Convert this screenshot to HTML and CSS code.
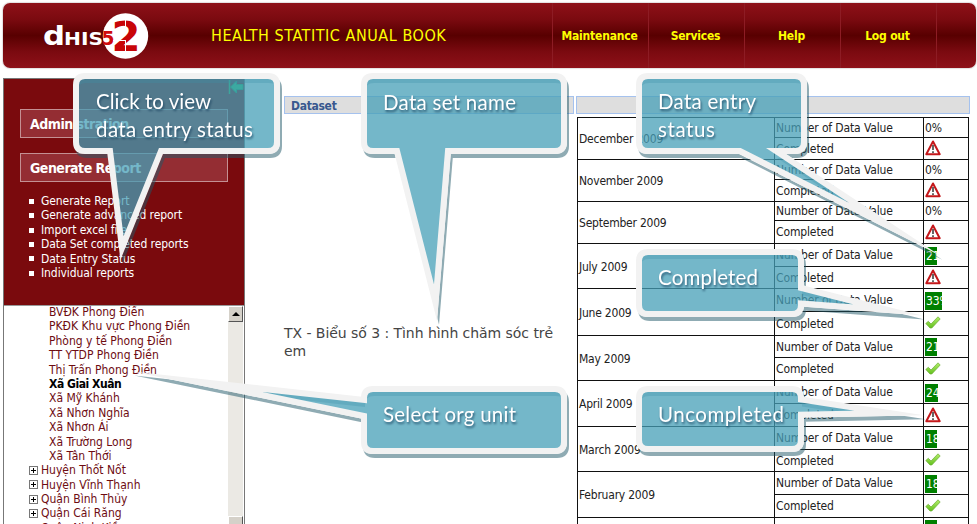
FILE: index.html
```
<!DOCTYPE html>
<html lang="vi">
<head>
<meta charset="utf-8">
<title>DHIS 2 - Data Entry Status</title>
<link rel="stylesheet" href="styles.css">
</head>
<body>
<header class="header">
  <svg class="logo" width="110" height="50" viewBox="42 11 110 50">
    <circle cx="125.500" cy="36" r="22.700" fill="#fff"/>
    <text class="logo-d" x="43" y="44.500" textLength="22" lengthAdjust="spacingAndGlyphs">d</text>
    <text class="logo-name" x="64" y="44.500" textLength="39" lengthAdjust="spacingAndGlyphs">HIS</text>
    <text class="logo-five" x="101.500" y="45" textLength="13" lengthAdjust="spacingAndGlyphs">5</text>
    <text class="logo-two" x="111.500" y="51" textLength="29" lengthAdjust="spacingAndGlyphs">2</text>
    <path d="M125.500 18V28M125.500 40V52M113 40.500H126" stroke="#fff"/>
  </svg>
  <h1 class="title">HEALTH STATITIC ANUAL BOOK</h1>
  <nav class="nav">
    <a>Maintenance</a><a>Services</a><a>Help</a><a>Log out</a>
  </nav>
</header>
<div class="page">
  <aside class="sidebar">
    <div class="menu">
      <svg class="hide-icon" width="16" height="14" viewBox="0 0 16 14"><path d="M1.500 0V14" stroke="#20b850" stroke-width="1.500"/><path d="M2.500 7L8.500 1V4.500H15V9.500H8.500V13Z" fill="#20c860" stroke="#10a050"/></svg>
      <div class="menu-head">Administration</div>
      <div class="menu-head">Generate Report</div>
      <ul class="links">
        <li>Generate Report</li><li>Generate advanced report</li><li>Import excel file</li><li>Data Set completed reports</li><li>Data Entry Status</li><li>Individual reports</li>
      </ul>
    </div>
    <div class="tree-wrap">
      <ul class="tree">
        <li class="leaf">BVĐK Phong Điền</li><li class="leaf">PKĐK Khu vực Phong Điền</li><li class="leaf">Phòng y tế Phong Điền</li><li class="leaf">TT YTDP Phong Điền</li><li class="leaf">Thị Trấn Phong Điền</li><li class="leaf selected">Xã Giai Xuân</li><li class="leaf">Xã Mỹ Khánh</li><li class="leaf">Xã Nhơn Nghĩa</li><li class="leaf">Xã Nhơn Ái</li><li class="leaf">Xã Trường Long</li><li class="leaf">Xã Tân Thới</li>
        <li><i class="plus"></i>Huyện Thốt Nốt</li><li><i class="plus"></i>Huyện Vĩnh Thạnh</li><li><i class="plus"></i>Quận Bình Thủy</li><li><i class="plus"></i>Quận Cái Răng</li><li><i class="plus"></i>Quận Ninh Kiều</li>
      </ul>
      <div class="scrollbar"><div class="scroll-up"><svg width="8" height="4"><path d="M0 4L4 0L8 4Z"/></svg></div><div class="thumb"></div></div>
    </div>
  </aside>
  <main class="main">
    <section class="dataset">
      <div class="col-head">Dataset</div>
      <p class="set-name">TX - Biểu số 3 : Tình hình chăm sóc trẻ em</p>
    </section>
    <section class="status">
      <div class="col-head"></div>
      <div class="grid">
        <div class="month">December 2009</div><div>Number of Data Value</div><div>0%</div><div>Completed</div><div><svg class="ico"><use href="#warn"/></svg></div>
        <div class="month">November 2009</div><div>Number of Data Value</div><div>0%</div><div>Completed</div><div><svg class="ico"><use href="#warn"/></svg></div>
        <div class="month">September 2009</div><div>Number of Data Value</div><div>0%</div><div>Completed</div><div><svg class="ico"><use href="#warn"/></svg></div>
        <div class="month">July 2009</div><div>Number of Data Value</div><div><b class="bar w21">21</b></div><div>Completed</div><div><svg class="ico"><use href="#warn"/></svg></div>
        <div class="month">June 2009</div><div>Number of Data Value</div><div><b class="bar w33">33%</b></div><div>Completed</div><div><svg class="ico"><use href="#ok"/></svg></div>
        <div class="month">May 2009</div><div>Number of Data Value</div><div><b class="bar w21">21</b></div><div>Completed</div><div><svg class="ico"><use href="#ok"/></svg></div>
        <div class="month">April 2009</div><div>Number of Data Value</div><div><b class="bar w24">24</b></div><div>Completed</div><div><svg class="ico"><use href="#warn"/></svg></div>
        <div class="month">March 2009</div><div>Number of Data Value</div><div><b class="bar w18">18</b></div><div>Completed</div><div><svg class="ico"><use href="#ok"/></svg></div>
        <div class="month">February 2009</div><div>Number of Data Value</div><div><b class="bar w18">18</b></div><div>Completed</div><div><svg class="ico"><use href="#ok"/></svg></div>
        <div class="last"></div><div class="last"></div><div class="last"><b class="bar w18"></b></div>
      </div>
    </section>
  </main>
</div>
<svg class="callouts" width="977" height="524" viewBox="0 0 977 524">
  <defs>
    <linearGradient id="tick" x1="0" y1="0" x2="0" y2="1"><stop offset="0" stop-color="#b4ee6a"/><stop offset="1" stop-color="#62c01e"/></linearGradient>
    <symbol id="warn" viewBox="0 0 16 16"><path d="M8 1.500L14.700 14.200H1.300Z" fill="#fff" stroke="#c4181b" stroke-width="2" stroke-linejoin="round"/><path d="M8 5V10M8 11.200V13" stroke="#333" stroke-width="1.500"/></symbol>
    <symbol id="ok" viewBox="0 0 16 16"><path d="M.8 8.500L3.300 6.300L6 9L13 1.800L15.200 4L6.800 13H5Z" fill="url(#tick)" stroke="#6aac34" stroke-width=".7" stroke-linejoin="round"/></symbol>
    <path id="c1" d="M85 76H268Q277 76 277 85V142Q277 151 268 151H161L122 248L110 151H85Q76 151 76 142V85Q76 76 85 76Z"/>
    <path id="c2" d="M373 76H555Q564 76 564 85V142Q564 151 555 151H448L435.500 302.500L397 151H373Q364 151 364 142V85Q364 76 373 76Z"/>
    <path id="c3" d="M648 76H795Q804 76 804 85V142Q804 151 795 151H776L895 229.500L740 151H648Q639 151 639 142V85Q639 76 648 76Z"/>
    <path id="c4" d="M648 252H792Q801 252 801 261V288L888 310L801 303.500V305Q801 314 792 314H648Q639 314 639 305V261Q639 252 648 252Z"/>
    <path id="c5" d="M648 389H792Q801 389 801 398V399.500L889 413L801 414.700V440Q801 449 792 449H648Q639 449 639 440V398Q639 389 648 389Z"/>
    <path id="c6" d="M373 389H555Q564 389 564 398V442Q564 451 555 451H373Q364 451 364 442V416L196 381.500L364 400V398Q364 389 373 389Z"/>
    <g id="all"><use href="#c1"/><use href="#c2"/><use href="#c3"/><use href="#c4"/><use href="#c5"/><use href="#c6"/></g>
    <mask id="outside" maskUnits="userSpaceOnUse" x="0" y="0" width="977" height="524"><rect width="977" height="524" fill="#fff"/><use href="#all" fill="#000" stroke="#000" stroke-width="6" stroke-miterlimit="30"/></mask>
    <mask id="edge" maskUnits="userSpaceOnUse" x="0" y="0" width="977" height="524"><use href="#all" fill="#fff"/><use href="#all" transform="translate(1 7)" fill="#000"/></mask>
  </defs>
  <g mask="url(#outside)"><use href="#all" class="drop" transform="translate(2 4)"/></g>
  <use href="#all" class="glass"/>
  <g mask="url(#edge)"><use href="#all" class="inner"/></g>
  <use href="#all" class="frame"/>
  <g class="labels">
    <text x="96" y="109" textLength="115">Click to view</text>
    <text x="96" y="137" textLength="157">data entry status</text>
    <text x="383" y="110" textLength="133">Data set name</text>
    <text x="658" y="109" textLength="98">Data entry</text>
    <text x="658" y="137" textLength="57">status</text>
    <text x="658" y="285" textLength="100">Completed</text>
    <text x="658" y="422" textLength="126">Uncompleted</text>
    <text x="383" y="422" textLength="133">Select org unit</text>
  </g>
</svg>
</body>
</html>
```
FILE: styles.css
```
* { box-sizing: border-box; }
html, body { width: 977px; height: 524px; overflow: hidden; }
body {
  margin: 0;
  padding: 3px 0 0 3px;
  position: relative;
  background: #fff;
  font: 12px/14.4px "DejaVu Sans Condensed", "DejaVu Sans", sans-serif;
  font-stretch: condensed;
  color: #222;
}
ul, p, h1 { margin: 0; padding: 0; list-style: none; }

.header {
  display: flex;
  align-items: center;
  width: 973px;
  height: 65px;
  padding-left: 39px;
  border-radius: 7px;
  background: linear-gradient(#8e1119, #7b0a10 25%, #580000 50%, #7b0a10 75%, #8e1119);
  box-shadow: 0 0 1px 1px #e3dfe0;
}
.logo { flex: none; }
.logo-d { font: bold 27px "DejaVu Sans", sans-serif; fill: #fff; }
.logo-name { font: bold 18px "DejaVu Sans", sans-serif; fill: #fff; }
.logo-five { font: bold 19px "DejaVu Sans", sans-serif; fill: #cf0a0c; }
.logo-two { font: bold 41px "DejaVu Sans", sans-serif; fill: #c80508; }
.title {
  width: 240px;
  margin-left: 59px;
  font-size: 16px;
  font-weight: normal;
  line-height: 20px;
  letter-spacing: .55px;
  color: #ff0;
  white-space: nowrap;
}
.nav { display: flex; align-self: stretch; margin-left: 101px; border-right: 1px solid #8d1c24; }
.nav a {
  display: flex;
  align-items: center;
  justify-content: center;
  width: 96px;
  padding: 2px 2px 0 0;
  border-left: 1px solid #8d1c24;
  font-weight: bold;
  letter-spacing: -.2px;
  color: #ff0;
}

.page { display: flex; height: 456px; padding-top: 10px; overflow: hidden; }
.sidebar { width: 242px; height: 446px; border: 1px solid #777; border-bottom: 0; }
.menu { position: relative; height: 227px; padding: 30px 16px 0; background: #7a0a0d; border-bottom: 1px solid #999; }
.hide-icon { position: absolute; right: 0; top: 1px; }
.menu-head {
  height: 29px;
  margin-bottom: 15px;
  padding: 0 9px;
  border: 1px solid #c49093;
  background: #942d33;
  font-size: 14px;
  line-height: 28px;
  font-weight: bold;
  letter-spacing: -.5px;
  color: #fff;
}
.links { padding: 0 0 0 9px; margin-top: -3px; }
.links li { display: flex; align-items: center; gap: 7px; white-space: nowrap; letter-spacing: -.08px; color: #fff; }
.links li::before { content: ""; width: 5px; height: 5px; background: #fff; }
.tree-wrap { display: flex; height: 218px; overflow: hidden; }
.tree { width: 224px; margin-top: -1px; padding-left: 25px; color: #6e0c12; }
.tree li { display: flex; align-items: center; height: 14.4px; white-space: nowrap; }
.tree .leaf { padding-left: 20px; }
.tree .selected { font-weight: bold; letter-spacing: -.45px; color: #000; }
.plus {
  width: 9px;
  height: 9px;
  margin-right: 3px;
  border: 1px solid #777;
  background: linear-gradient(#000, #000) center/5px 1px no-repeat, linear-gradient(#000, #000) center/1px 5px no-repeat;
}
.scrollbar { display: flex; flex-direction: column; justify-content: space-between; width: 15px; background: #ebe9e4; }
.scroll-up, .thumb { border: 1px solid #fff; border-right-color: #555; border-bottom-color: #555; background: #d5d1c9; }
.scroll-up { display: flex; align-items: center; justify-content: center; height: 16px; }
.thumb { height: 8px; border-bottom: 0; }

.main { display: flex; gap: 2px; padding: 18px 0 0 39px; }
.dataset { width: 290px; }
.status { width: 394px; }
.col-head {
  height: 18px;
  padding-left: 6px;
  border: 1px solid #a5c2ee;
  background: #dedede;
  line-height: 18px;
  font-weight: bold;
  letter-spacing: -.3px;
  color: #38588f;
}
.set-name { margin-top: 210px; font: 14px/18px "DejaVu Sans", sans-serif; letter-spacing: -.05px; color: #444; }
.grid {
  display: grid;
  width: 392px;
  margin: 3px 0 0 1px;
  grid-template-columns: 197px 149px 45px;
  grid-template-rows: 20px 22px 20px 22px 19px 23px 23px 22px 23px 24px 22px 23px 23px 23px 23px 22px 23px 23px 7px;
  border: 1px solid #111;
  border-width: 1px 0 0 1px;
}
.grid > div { display: flex; align-items: center; padding: 1px 0 0 1px; border: 1px solid #111; border-width: 0 1px 1px 0; white-space: nowrap; letter-spacing: -.13px; }
.grid .month { grid-row: span 2; padding: 2px 0 0 1px; letter-spacing: -.22px; }
.grid .last { align-items: start; padding-top: 2px; border-bottom: 0; overflow: hidden; }
.bar { height: 18px; overflow: hidden; padding-left: 1px; background: #008000; font-weight: normal; line-height: 19px; color: #fff; }
.w21 { width: 12px; }
.w33 { width: 17px; }
.w24 { width: 13px; }
.w18 { width: 12px; }
.ico { width: 16px; height: 16px; margin-top: -2px; }

.callouts { position: absolute; left: 0; top: 0; }
.drop { fill: rgb(32, 88, 104); stroke: rgb(32, 88, 104); stroke-width: 6; stroke-miterlimit: 30; opacity: .5; }
.glass { fill: rgba(69, 159, 183, .75); }
.inner { fill: rgba(60, 145, 170, .3); }
.frame { fill: none; stroke: #f2f2f2; stroke-width: 6; stroke-miterlimit: 30; }
.labels { font: 20.5px Lato, sans-serif; fill: #fff; filter: drop-shadow(1px 2px 1px rgba(20, 60, 90, .7)); }
```
